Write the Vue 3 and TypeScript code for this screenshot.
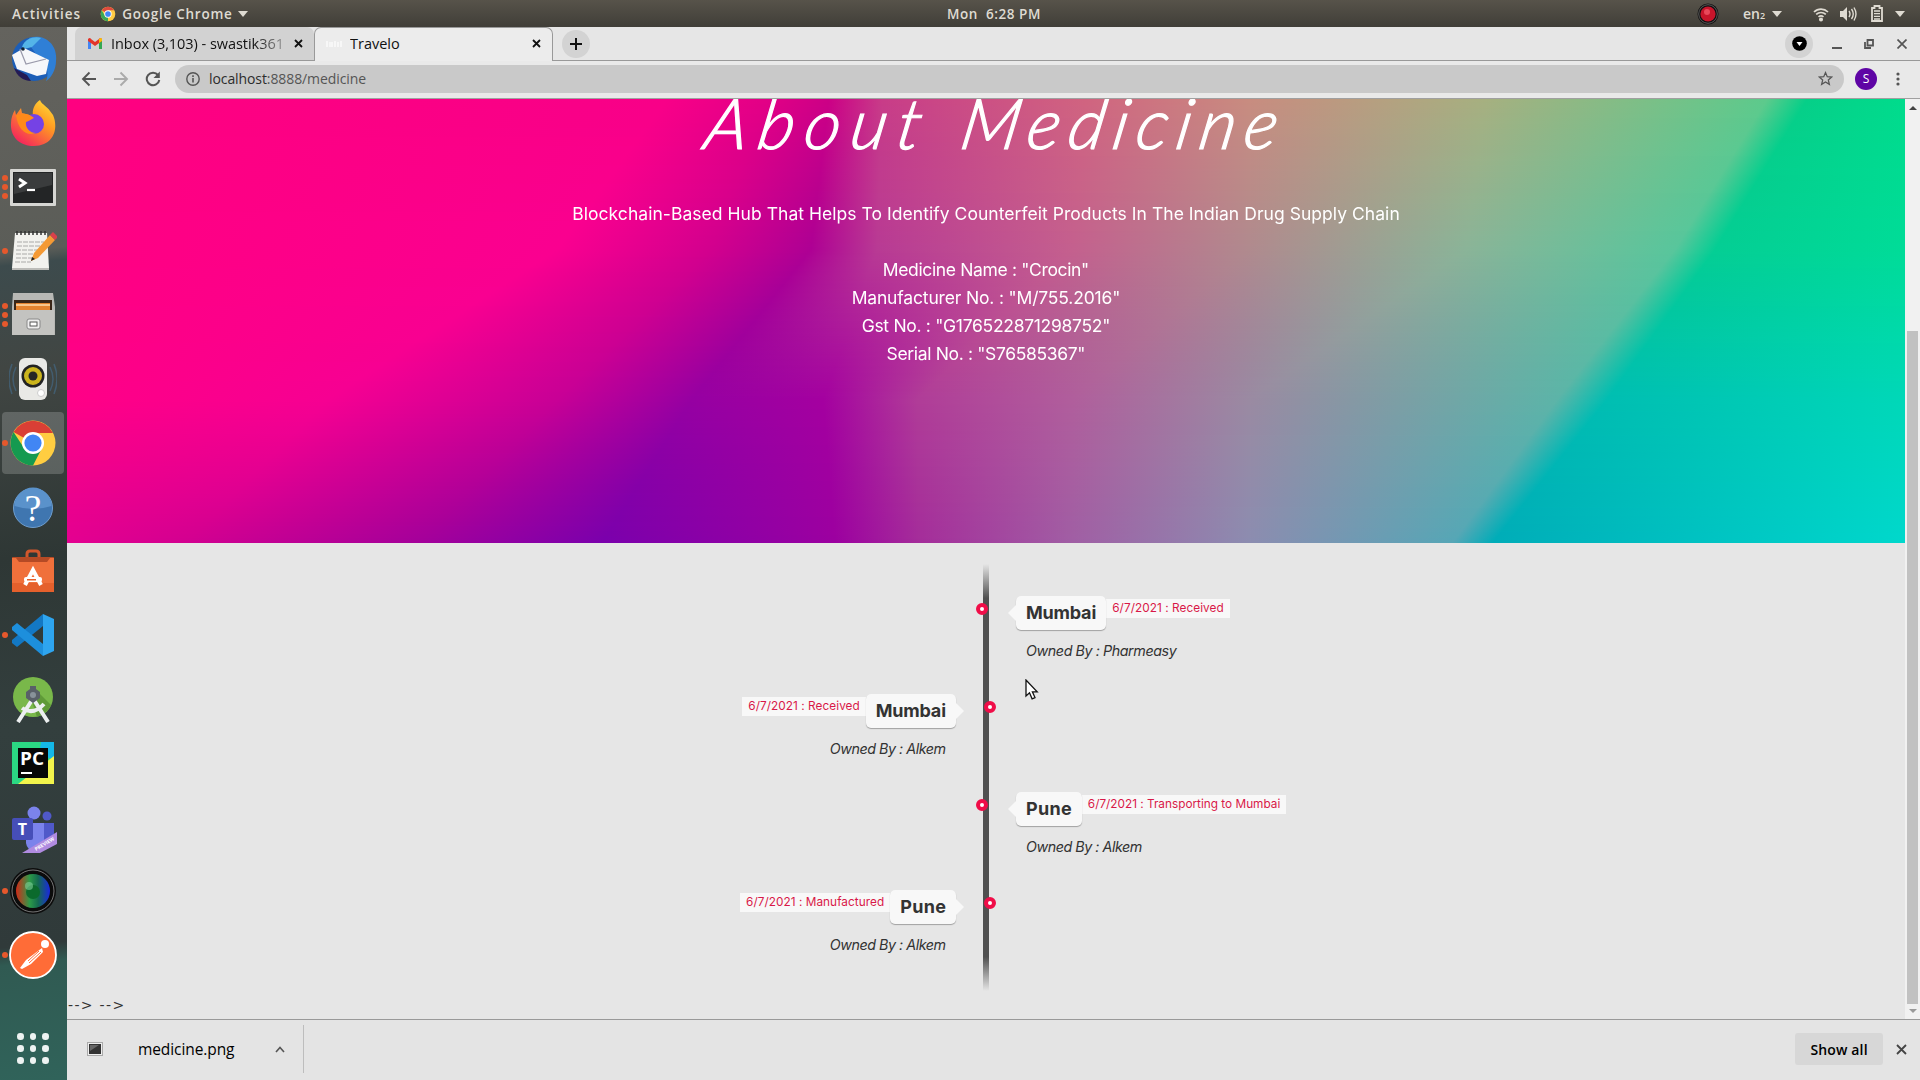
<script setup lang="ts">
import { onMounted, ref } from 'vue'

interface Stop { x: number; c: [number, number, number] }
interface Entry { side: 'left' | 'right'; place: string; placeW: number; status: string; statusW: number; owner: string; ownerW: number }

const entries: Entry[] = [
  { side: 'right', place: 'Mumbai', placeW: 70, status: '6/7/2021 : Received', statusW: 111, owner: 'Owned By : Pharmeasy', ownerW: 151 },
  { side: 'left', place: 'Mumbai', placeW: 70, status: '6/7/2021 : Received', statusW: 111, owner: 'Owned By : Alkem', ownerW: 116 },
  { side: 'right', place: 'Pune', placeW: 46, status: '6/7/2021 : Transporting to Mumbai', statusW: 192, owner: 'Owned By : Alkem', ownerW: 116 },
  { side: 'left', place: 'Pune', placeW: 46, status: '6/7/2021 : Manufactured', statusW: 138, owner: 'Owned By : Alkem', ownerW: 116 },
]

const facts = [
  { text: 'Medicine Name : "Crocin"', w: 207 },
  { text: 'Manufacturer No. : "M/755.2016"', w: 269 },
  { text: 'Gst No. : "G176522871298752"', w: 249 },
  { text: 'Serial No. : "S76585367"', w: 199 },
]

/* Tracks a run of text so that it spans the given width. */
const vFit = {
  mounted(el: HTMLElement, binding: { value: number }) {
    const n = (el.textContent ?? '').trim().length - 1
    if (n < 1) return
    const gap = (binding.value - el.offsetWidth) / n
    el.style.letterSpacing = `${gap}px`
    el.style.marginRight = `${-gap}px`
  },
}

const hex = (s: string): [number, number, number] => [
  parseInt(s.slice(0, 2), 16), parseInt(s.slice(2, 4), 16), parseInt(s.slice(4, 6), 16),
]
const row = (...p: [number, string][]): Stop[] => p.map(([x, c]) => ({ x, c: hex(c) }))

/* Colour rows of the banner, interpolated between one another line by line. */
const rows: { y: number; stops: Stop[] }[] = [
  { y: 0, stops: row([0, 'ff0080'], [600, 'f80088'], [700, 'e20086'], [762, 'cc0086'], [815, 'c83c88'], [1020, 'd06480'], [1182, 'c88c80'], [1418, 'a6b080'], [1700, '5cca8c'], [1740, '06cf88'], [1838, '00dc8c']) },
  { y: 150, stops: row([0, 'ff0082'], [490, 'fa0090'], [645, 'd2008e'], [744, 'ae0094'], [810, 'b83a94'], [1005, 'c4608e'], [1182, 'b08a8e'], [1400, '8ab498'], [1608, '58c69c'], [1648, '04ce94'], [1838, '00dc98']) },
  { y: 300, stops: row([0, 'ff0086'], [260, 'f60092'], [490, 'c80096'], [625, '9600a2'], [756, 'a400a0'], [850, 'b03c98'], [1005, 'b05e9c'], [1182, '9a8aa2'], [1490, '5cb4a8'], [1540, '00beb2'], [1838, '00d8b8']) },
  { y: 444, stops: row([0, 'e40090'], [118, 'd20090'], [350, 'a4009a'], [535, '7a00ac'], [768, '9c00a0'], [851, 'a42c9a'], [1005, 'a05ea4'], [1182, '8c8cb0'], [1385, '56a6b6'], [1425, '00acb8'], [1838, '00d8cc']) },
]

const banner = ref<HTMLCanvasElement | null>(null)

onMounted(() => {
  const ctx = banner.value?.getContext('2d')
  if (!ctx) return
  for (let y = 0; y < 444; y++) {
    let k = 0
    while (k < rows.length - 2 && y >= rows[k + 1].y) k++
    const a = rows[k]
    const b = rows[k + 1]
    const t = (y - a.y) / (b.y - a.y)
    const g = ctx.createLinearGradient(0, 0, 1838, 0)
    a.stops.forEach((s, i) => {
      const e = b.stops[i]
      const mix = (p: number, q: number) => p + (q - p) * t
      const c = s.c.map((v, j) => Math.round(mix(v, e.c[j])))
      g.addColorStop(mix(s.x, e.x) / 1838, `rgb(${c[0]},${c[1]},${c[2]})`)
    })
    ctx.fillStyle = g
    ctx.fillRect(0, y, 1838, 1)
  }
})
</script>

<template>
  <div class="desktop">
    <header class="topbar">
      <div class="tb-left">
        <span v-fit="68" class="t">Activities</span>
        <svg class="tb-chrome" width="16" height="16" viewBox="0 0 48 48"><circle cx="24" cy="24" r="22" fill="#fc4" /><path d="M24 24 5 13A22 22 0 0 1 43 13H24Z" fill="#dd4b3e" /><path d="M24 24 24 46A22 22 0 0 1 5 13L15 29Z" fill="#3aa757" /><circle cx="24" cy="24" r="11" fill="#fff" /><circle cx="24" cy="24" r="8.5" fill="#4286f5" /></svg>
        <span v-fit="110" class="t">Google Chrome</span>
        <i class="caret"></i>
      </div>
      <div class="tb-mid"><span v-fit="93" class="t">Mon&nbsp; 6:28 PM</span></div>
      <div class="tb-right">
        <svg width="22" height="22" viewBox="0 0 22 22"><circle cx="11" cy="11" r="10.5" fill="#111" /><circle cx="11" cy="11" r="9.3" fill="none" stroke="#777" stroke-width=".7" /><circle cx="11" cy="11" r="7.6" fill="#c8152b" /><circle cx="10" cy="9" r="3" fill="#e8485a" /></svg>
        <span class="t lang">en<small>2</small></span><i class="caret"></i>
        <svg class="wifi" width="16" height="16" viewBox="0 0 16 16" fill="none" stroke="#dfdbd2" stroke-width="1.7"><path d="M1 6a10 10 0 0 1 14 0M3.2 8.4a7 7 0 0 1 9.6 0M5.5 10.8a4 4 0 0 1 5 0" /><circle cx="8" cy="13.5" r="1.2" fill="#dfdbd2" /></svg>
        <svg class="vol" width="17" height="16" viewBox="0 0 17 16"><path d="M0 5h3l4-4v14l-4-4H0Z" fill="#dfdbd2" /><path d="M9 5q2 3 0 6M11.500 3q3.500 5 0 10M14 1.500q4 6.500 0 13" fill="none" stroke="#dfdbd2" stroke-width="1.400" /></svg>
        <svg class="bat" width="12" height="17" viewBox="0 0 12 17"><path d="M1 3h2.500V1h5v2H11v13H1Z" fill="none" stroke="#dfdbd2" stroke-width="1.800" /><path d="M3 6h6M3 8.700h6M3 11.300h6M3 14h6" stroke="#dfdbd2" stroke-width="1.300" /></svg>
        <i class="caret"></i>
      </div>
    </header>

    <div class="body">
      <nav class="dock">
        <div class="cell">
          <svg viewBox="0 0 48 48"><circle cx="25" cy="24" r="22" fill="#1c5eb8" /><path d="M20 3C34-2 49 8 47 26c0 9-5 17-10 20 2-5 2-10 0-13L22 12Z" fill="#2f7fd6" /><path d="M13 12C16 3 26 1 32 3l-9 9-8 2Z" fill="#54b4e8" /><path d="M3 20 15 13l25 12-3 14-9 2-20-7Z" fill="#f6f7fa" /><path d="m11 14 6 15 20-5" fill="none" stroke="#99a" stroke-width="1.200" /><path d="M5 33c3 8 9 13 17 13l-4-6Z" fill="#241b55" /><circle cx="14" cy="14" r="1.800" fill="#123" /></svg>
        </div>
        <div class="cell">
          <svg viewBox="0 0 48 48"><defs><linearGradient id="ff" x1="1" y1="0" x2=".3" y2="1"><stop offset="0" stop-color="#ffe83c" /><stop offset=".45" stop-color="#ff9a22" /><stop offset="1" stop-color="#f5265c" /></linearGradient></defs><path d="M31 1c2 5 7 6 10 11l3 4c5 11 3 30-19 31C11 47 1 38 2 24c0-5 2-10 4-13l1 5 5-7 1 5 11 3c-1-6 1-12 7-16Z" fill="url(#ff)" /><circle cx="25" cy="25" r="10" fill="#7542e5" /><path d="M7 16c8-3 15 0 18 3-3 1-4 3-8 4-1 6 4 11 10 11-9 4-18-3-20-18Z" fill="#ff8a1a" /></svg>
        </div>
        <div class="cell"><b class="run three"><i></i><i></i><i></i></b>
          <svg viewBox="0 0 48 48"><rect x="1" y="6" width="46" height="37" rx="1" fill="#d6d6d3" /><rect x="4" y="9" width="40" height="31" fill="#232526" /><path d="M5 10h38v12L5 31Z" fill="#3a3c3d" /><path d="m10 16 6 4-6 4" fill="none" stroke="#fff" stroke-width="3" /><path d="M18 27h8" stroke="#fff" stroke-width="2.200" /></svg>
        </div>
        <div class="cell"><b class="run"><i></i></b>
          <svg viewBox="0 0 48 48"><path d="M6 6h32l2 35H3Z" fill="#f2f2ee" /><path d="M3 41h37v2H3Z" fill="#bcbcb8" /><path d="M8 15h27M8 19h25M7 23h26M7 27h22M7 31h18M6 35h16" stroke="#a9aaa7" stroke-width="1.200" stroke-dasharray="5 1" /><path d="M8 8V4M12 8V4M16 8V4M20 8V4M24 8V4M28 8V4M32 8V4M36 8V4" stroke="#333" stroke-width="1.500" /><path d="m22 34 3-8L41 8l5 5-17 18Z" fill="#f49a35" /><path d="m41 8 3-3 5 5-3 3Z" fill="#d9404a" /><path d="m22 34 1-4 3 2Z" fill="#222" /></svg>
        </div>
        <div class="cell"><b class="run three"><i></i><i></i><i></i></b>
          <svg viewBox="0 0 48 48"><path d="M4 2h40l2 14v28H3V16Z" fill="#b8b8b5" /><path d="M5 9h38v12H5Z" fill="#3a2618" /><path d="M7 12h34v8H7Z" fill="#e5832f" /><path d="M7 14h34" stroke="#ffdcae" stroke-width="1.500" /><path d="M3 19h42v25H3Z" fill="#c3c3c0" /><rect x="18" y="28" width="13" height="10" rx="2" fill="#eee" stroke="#888" /><rect x="21" y="31" width="7" height="4" fill="#fff" stroke="#555" /></svg>
        </div>
        <div class="cell">
          <svg viewBox="0 0 48 48"><path d="M7 12q-6 12 0 24M41 12q6 12 0 24M3 9q-6 15 0 30M45 9q6 15 0 30" fill="none" stroke="#456c8c" stroke-width="1.500" opacity=".6" /><rect x="10" y="3" width="28" height="42" rx="6" fill="#e9e9e6" /><circle cx="24" cy="21" r="11.500" fill="#222" /><circle cx="24" cy="21" r="9" fill="#cbb41c" /><circle cx="24" cy="21" r="4.500" fill="#252525" /><circle cx="32" cy="38" r="3.500" fill="#fff" stroke="#ccc" /></svg>
        </div>
        <div class="cell active"><b class="run"><i></i></b>
          <svg viewBox="0 0 48 48"><circle cx="24" cy="24" r="22.500" fill="#ffcd41" /><path d="M24 24 4.500 13A22.500 22.500 0 0 1 44 14H24Z" fill="#d93f35" /><path d="m33 29-9 17.500A22.500 22.500 0 0 1 4.500 13L15 29Z" fill="#159a50" /><circle cx="24" cy="24" r="11" fill="#fff" /><circle cx="24" cy="24" r="8.600" fill="#4186f4" /></svg>
        </div>
        <div class="cell">
          <svg viewBox="0 0 48 48"><circle cx="24" cy="25" r="19.500" fill="#3f76b0" stroke="#6f9fd0" /><path d="M5.500 23a18.500 18.500 0 0 1 37 0q-18.500 6-37 0Z" fill="#5a92cb" /><text x="24" y="38" text-anchor="middle" font-family="Liberation Serif, serif" font-size="38" fill="#fff">?</text></svg>
        </div>
        <div class="cell">
          <svg viewBox="0 0 48 48"><path d="M18 14V7q0-3 3-3h6q3 0 3 3v7" fill="none" stroke="#d2572c" stroke-width="3" /><path d="M3 10h42l-2 7H5Z" fill="#b54a25" /><path d="M3 11h4l3 4h28l3-4h4v34H3Z" fill="#f0703b" /><path d="M3 36h42v9H3Z" fill="#e5602c" /><path d="m16 38 8-15 8 15" fill="none" stroke="#fff" stroke-width="4" /><rect x="15" y="30" width="18" height="5" rx="2" fill="#fff" /><rect x="18" y="32" width="9" height="1.500" fill="#e5602c" /></svg>
        </div>
        <div class="cell"><b class="run"><i></i></b>
          <svg viewBox="0 0 48 48"><path d="m34 3 11 5v32l-11 5Z" fill="#2ea5ef" /><path d="M34 3v12L8 36l-5-4v-3Z" fill="#1378c4" /><path d="M34 45V33L8 12l-5 4v3Z" fill="#1d8fdc" /></svg>
        </div>
        <div class="cell">
          <svg viewBox="0 0 48 48"><circle cx="24" cy="22" r="20" fill="#79b84a" /><path d="m27 15 15 15q-4 9-14 12l-6-19Z" fill="#5f9a38" /><path d="M23 25 9 47M25 25l14 22M13 33q11 8 22-4" fill="none" stroke="#eceff0" stroke-width="4" /><path d="M21 11h6v3l4 3v6l-7 5-7-5v-6l4-3Z" fill="#596068" /><circle cx="24" cy="20" r="3" fill="#88929a" /></svg>
        </div>
        <div class="cell">
          <svg viewBox="0 0 48 48"><path d="M3 3h42v42H3Z" fill="#2bd883" /><path d="M32 3h13v18L30 15Z" fill="#14b8e8" /><path d="m45 17-36 28h36Z" fill="#f2f44c" /><rect x="9" y="9" width="30" height="30" fill="#070707" /><text x="11" y="26" font-family="Open Sans, sans-serif" font-weight="700" font-size="17" textLength="24" lengthAdjust="spacingAndGlyphs" fill="#fff">PC</text><path d="M12 34h11" stroke="#fff" stroke-width="2" /></svg>
        </div>
        <div class="cell">
          <svg class="low" viewBox="0 0 48 48"><circle cx="25" cy="8" r="6.500" fill="#7b83eb" /><circle cx="38" cy="11" r="4.500" fill="#5059c9" /><path d="M31 18h14v16q-2 7-10 6Z" fill="#5059c9" /><path d="M17 18h18v20q-2 8-10 8-7-1-8-8Z" fill="#7b83eb" /><rect x="3" y="13" width="21" height="22" rx="2" fill="#464eb8" /><text x="13.500" y="30" text-anchor="middle" font-family="Open Sans, sans-serif" font-weight="700" font-size="16" fill="#fff">T</text><path d="m13 48 35-21v12L31 48Z" fill="#b08be0" /><text transform="translate(27 46) rotate(-31)" font-family="Open Sans, sans-serif" font-weight="700" font-size="5" fill="#fff">PREVIEW</text></svg>
        </div>
        <div class="cell"><b class="run"><i></i></b>
          <svg viewBox="0 0 48 48"><defs><linearGradient id="lens"><stop offset="0" stop-color="#d02a18" /><stop offset=".4" stop-color="#2c9a48" /><stop offset=".65" stop-color="#146a50" /><stop offset="1" stop-color="#1a28e0" /></linearGradient></defs><circle cx="24" cy="24" r="23" fill="#0c0c0c" /><circle cx="24" cy="24" r="21" fill="none" stroke="#777" /><circle cx="24" cy="24" r="17" fill="url(#lens)" /><circle cx="24" cy="25" r="7" fill="#0b6a2c" /><circle cx="20" cy="19" r="4" fill="#7fd09a" opacity=".6" /></svg>
        </div>
        <div class="cell"><b class="run"><i></i></b>
          <svg viewBox="0 0 48 48"><circle cx="24" cy="24" r="23" fill="#ff6c37" stroke="#fff" stroke-width="1.800" /><circle cx="36" cy="13" r="4" fill="#fff" /><path d="M33 17 17 29l-6 8 2 1 9-5 12-12Z" fill="#fff" /><path d="m30 20-11 10m13-9L20 32" stroke="#ff6c37" stroke-width="1" /></svg>
        </div>
        <div class="apps"><i v-for="n in 9" :key="n"></i></div>
      </nav>

      <section class="browser">
        <div class="tabs">
          <div class="tab idle">
            <svg width="14" height="11" viewBox="0 0 14 11"><path d="M0 1v10h3V4Z" fill="#4285f4" /><path d="M14 1v10h-3V4Z" fill="#34a853" /><path d="M0 1q2-2 3 0l4 3v4L0 3Z" fill="#e3352b" /><path d="M14 1q-2-2-3 0L7 4v4l7-5Z" fill="#e3352b" /><path d="M11 1q2-2 3 0v2l-3 2Z" fill="#fbbc04" /></svg>
            <span class="name fade"><span v-fit="173" class="t">Inbox (3,103) - swastik361</span></span>
            <svg class="x" width="9" height="9" viewBox="0 0 9 9"><path d="m1 1 7 7m0-7L1 8" stroke="#111" stroke-width="1.800" /></svg>
          </div>
          <div class="tab open">
            <svg width="16" height="12" viewBox="0 0 16 12"><path d="M1 3v6M4 4v5m2-5v5m3-6v6m3-5v5m3-6v6" stroke="#fafafa" stroke-width="1.500" /></svg>
            <span class="name"><span v-fit="50" class="t">Travelo</span></span>
            <svg class="x" width="9" height="9" viewBox="0 0 9 9"><path d="m1 1 7 7m0-7L1 8" stroke="#111" stroke-width="1.800" /></svg>
          </div>
          <div class="round"><svg width="12" height="12" viewBox="0 0 12 12"><path d="M6 0v12M0 6h12" stroke="#111" stroke-width="2" /></svg></div>
          <div class="win">
            <div class="round"><svg width="15" height="15" viewBox="0 0 15 15"><circle cx="7.500" cy="7.500" r="7.300" fill="#000" /><path d="M4.500 6h6l-3 4Z" fill="#fff" /></svg></div>
            <svg width="10" height="12" viewBox="0 0 10 12"><path d="M0 10h10" stroke="#555" stroke-width="2" /></svg>
            <svg width="10" height="10" viewBox="0 0 10 10" fill="none" stroke="#555" stroke-width="1.800"><path d="M3.500 1H9v5.500H3.500ZM1 3v6h6" /></svg>
            <svg width="10" height="10" viewBox="0 0 10 10"><path d="m.5.500 9 9m0-9-9 9" stroke="#555" stroke-width="1.700" /></svg>
          </div>
        </div>

        <div class="toolbar">
          <svg width="16" height="16" viewBox="0 0 16 16" fill="none" stroke="#555" stroke-width="1.900"><path d="M15 8H2m6.500-6.500L2 8l6.500 6.500" /></svg>
          <svg width="16" height="16" viewBox="0 0 16 16" fill="none" stroke="#aaa" stroke-width="1.900"><path d="M1 8h13M7.500 1.500 14 8l-6.500 6.500" /></svg>
          <svg width="16" height="16" viewBox="0 0 16 16" fill="none" stroke="#555" stroke-width="2"><path d="M13 4a6.300 6.300 0 1 0 1.300 5" /><path d="M14.800.500V7H8.500Z" fill="#555" stroke="none" /></svg>
          <div class="omni">
            <svg width="14" height="14" viewBox="0 0 14 14"><circle cx="7" cy="7" r="6.200" fill="none" stroke="#555" stroke-width="1.400" /><path d="M7 6v4.500M7 3.300v1.600" stroke="#555" stroke-width="1.600" /></svg>
            <span v-fit="157" class="t url"><em>localhost</em>:8888/medicine</span>
            <svg class="star" width="15" height="15" viewBox="0 0 24 24"><path d="m12 2.500 2.800 6.600 7.200.6-5.500 4.700 1.700 7-6.200-3.700-6.200 3.700 1.700-7L2 9.700l7.200-.6Z" fill="none" stroke="#555" stroke-width="2" /></svg>
          </div>
          <span class="avatar">S</span>
          <svg class="kebab" width="4" height="14" viewBox="0 0 4 14" fill="#555"><circle cx="2" cy="2" r="1.600" /><circle cx="2" cy="7" r="1.600" /><circle cx="2" cy="12" r="1.600" /></svg>
        </div>

        <div class="view">
          <main class="page">
            <div class="hero">
              <canvas ref="banner" class="banner" width="1838" height="444"></canvas>
              <div class="hero-text">
                <h1><span v-fit="216">About</span><span v-fit="316">Medicine</span></h1>
                <p class="lead"><span v-fit="828" class="t">Blockchain-Based Hub That Helps To Identify Counterfeit Products In The Indian Drug Supply Chain</span></p>
                <p v-for="f in facts" :key="f.text" class="fact"><span v-fit="f.w" class="t">{{ f.text }}</span></p>
              </div>
            </div>
            <ul class="timeline">
              <li v-for="(e, i) in entries" :key="i" :class="e.side">
                <i class="dot"></i>
                <div class="head">
                  <span class="flag"><span v-fit="e.placeW" class="t">{{ e.place }}</span></span>
                  <span class="date"><span v-fit="e.statusW" class="t">{{ e.status }}</span></span>
                </div>
                <div class="desc"><span v-fit="e.ownerW" class="t">{{ e.owner }}</span></div>
              </li>
            </ul>
            <div class="rest"><span v-fit="56" class="t">--&gt; --&gt;</span></div>
            <svg class="cursor" width="14" height="22" viewBox="0 0 14 22"><path d="M1 1v16l3.500-3.200 2.600 6 2.900-1.200-2.600-5.800h4.800Z" fill="#fff" stroke="#111" stroke-width="1.300" /></svg>
          </main>
          <div class="scroll"><i class="up"></i><i class="thumb"></i><i class="down"></i></div>
        </div>

        <footer class="shelf">
          <svg width="16" height="14" viewBox="0 0 16 14"><rect x=".5" y=".5" width="15" height="13" fill="#eee" stroke="#aaa" /><rect x="2" y="2" width="12" height="10" fill="#333" /><path d="M3 3h9L3 9Z" fill="#666" /></svg>
          <span v-fit="96" class="t file">medicine.png</span>
          <svg class="chev" width="10" height="7" viewBox="0 0 10 7"><path d="m1 6 4-4.500L9 6" fill="none" stroke="#555" stroke-width="1.600" /></svg>
          <i class="sep"></i>
          <button class="all"><span v-fit="57" class="t">Show all</span></button>
          <svg class="shut" width="11" height="11" viewBox="0 0 11 11"><path d="m1 1 9 9m0-9-9 9" stroke="#444" stroke-width="1.800" /></svg>
        </footer>
      </section>
    </div>
  </div>
</template>

<style>
body { margin: 0; overflow: hidden; }
</style>

<style scoped>
* { box-sizing: border-box; }
.desktop { width: 1920px; height: 1080px; display: flex; flex-direction: column; font-family: "Open Sans", "Noto Sans", sans-serif; font-size: 14px; color: #111; overflow: hidden; font-variant-ligatures: none; }
.t { display: inline-block; white-space: pre; }
svg { display: block; flex: none; }

.topbar { height: 27px; flex: none; display: flex; align-items: center; background: linear-gradient(#57534a, #403e38); color: #dfdbd2; font-weight: 600; font-size: 13.500px; position: relative; }
.tb-left { display: flex; align-items: center; padding-left: 12px; width: 900px; }
.tb-chrome { margin: 0 6px 0 20px; }
.caret { width: 0; height: 0; border: 5px solid transparent; border-top: 6px solid #dfdbd2; border-bottom: 0; margin-left: 6px; }
.tb-mid { padding-left: 47px; width: 200px; }
.tb-right { margin-left: auto; display: flex; align-items: center; padding-right: 15px; }
.lang { margin-left: 24px; font-size: 14px; width: 23px; }
.lang small { font-size: 9px; }
.wifi { margin-left: 31px; }
.vol { margin-left: 11px; }
.bat { margin: 0 6px 0 14px; }

.body { flex: 1; display: flex; min-height: 0; }
.dock { width: 67px; flex: none; display: flex; flex-direction: column; background: linear-gradient(174deg, #64635e 0, #5b5d58 225px, #3d4b4d 238px, #414643 340px, #2e3735 530px, #333f3e 700px, #303a3a 916px, #305a52 934px, #30635a 1053px); }
.cell { height: 64px; flex: none; display: flex; align-items: center; padding-left: 9px; position: relative; }
.cell > svg { width: 48px; height: 48px; }
.cell > .low { margin-top: 4px; }
.active::before { content: ""; position: absolute; left: 2px; top: 1px; width: 62px; height: 62px; border-radius: 4px; background: #ffffff30; }
.active > svg { position: relative; }
.run { position: absolute; left: 2px; top: 0; height: 64px; display: flex; flex-direction: column; justify-content: center; gap: 3px; }
.run i { width: 6px; height: 6px; border-radius: 50%; background: #e6582c; }
.apps { margin: 46px auto 0 17px; display: grid; grid-template-columns: repeat(3, 7px); gap: 5.500px; }
.apps i { width: 6.500px; height: 6.500px; border-radius: 50%; background: #eef3f2; }

.browser { flex: 1; min-width: 0; display: flex; flex-direction: column; background: #e6e6e6; }
.tabs { height: 34px; flex: none; display: flex; align-items: center; border-bottom: 1px solid #999; background: #e6e6e6; padding-left: 8px; }
.tab { height: 33px; width: 239px; display: flex; align-items: center; border-radius: 7px 7px 0 0; }
.idle { background: #d2d2d2; padding: 0 11px 0 13px; }
.open { height: 34px; background: #ececec; border: 1px solid #999; border-bottom: 0; padding: 0 11px 2px 11px; margin-bottom: -1px; position: relative; }
.name { margin-left: 9px; font-size: 14.500px; overflow: hidden; white-space: nowrap; }
.open .name { margin-left: 8px; }
.fade { width: 174px; -webkit-mask-image: linear-gradient(90deg, #000 82%, #0004); mask-image: linear-gradient(90deg, #000 82%, #0004); }
.x { margin-left: auto; }
.round { width: 28px; height: 28px; border-radius: 50%; background: #d3d3d3; display: flex; align-items: center; justify-content: center; flex: none; }
.tab + .round { margin-left: 9px; }
.win { margin-left: auto; display: flex; align-items: center; padding-right: 13px; }
.win > svg:nth-of-type(1) { margin: 0 22px 0 19px; }
.win > svg:nth-of-type(2) { margin-right: 23px; }

.toolbar { height: 38px; flex: none; display: flex; align-items: center; background: #e9e9e9; border-bottom: 1px solid #a0a0a0; padding: 0 20px 2px 14px; gap: 16px; }
.omni { width: 1669px; height: 28px; border-radius: 14px; background: #c9c9c9; display: flex; align-items: center; padding: 0 11px; margin-left: -2px; }
.url { margin-left: 9px; color: #555; font-size: 14px; }
.url em { font-style: normal; color: #2c2c2c; }
.star { margin-left: auto; }
.avatar { width: 22px; height: 22px; border-radius: 50%; background: #5f05a5; color: #fff; font-size: 12px; line-height: 22px; text-align: center; margin-left: -5px; }
.kebab { margin-left: 3px; }

.view { height: 920px; flex: none; display: flex; }
.page { width: 1838px; position: relative; font-family: Inter, Roboto, sans-serif; overflow: hidden; }
.hero { height: 444px; display: grid; overflow: hidden; }
.banner { grid-area: 1 / 1; display: block; }
.hero-text { grid-area: 1 / 1; color: #fff; text-align: center; position: relative; height: 444px; }
h1 { margin: -19px 0 0; height: 84px; line-height: 84px; font-family: Lato, sans-serif; font-weight: 300; font-style: italic; font-size: 70px; display: flex; justify-content: center; gap: 40px; transform: skewX(-10deg); padding-left: 14px; -webkit-text-stroke: 1.200px #fff; }
.lead { margin: 36px 0 28px; height: 28px; line-height: 28px; font-size: 17.500px; }
.fact { margin: 0; height: 28px; line-height: 28px; font-size: 17.500px; }

.timeline { list-style: none; margin: 21px 0 0; padding: 32px 0 0; height: 427px; position: relative; color: #333; }
.timeline::before { content: ""; position: absolute; left: 916px; top: 0; width: 6px; height: 427px; background: linear-gradient(#50505000 0, #505050 8%, #505050 92%, #50505000 100%); }
li { height: 98px; position: relative; }
li.right { padding-left: 949px; }
li.left { padding-right: 949px; display: flex; flex-direction: column; align-items: flex-end; }
.dot { position: absolute; top: 7px; left: 909px; width: 12px; height: 12px; border-radius: 50%; background: #fff; border: 4px solid #f00d48; }
li.left .dot { left: 917px; }
.head { display: flex; align-items: flex-start; height: 34px; }
li.left .head { flex-direction: row-reverse; }
.flag { height: 34px; line-height: 34px; padding: 0 10px; border-radius: 5px; background: #f8f8f8; box-shadow: 0 1px 1px rgba(0, 0, 0, .3); font-weight: 700; font-size: 18px; position: relative; }
.flag::before { content: ""; position: absolute; top: 9px; left: -8px; border: 8px solid transparent; border-right-color: #f8f8f8; border-left: 0; }
li.left .flag::before { left: auto; right: -8px; border-left: 8px solid #f8f8f8; border-right: 0; }
.date { margin: 3px 0 0; height: 19px; line-height: 19px; padding: 0 6px; background: #f8f8f8; color: #d81848; font-size: 11.800px; }
.desc { margin: 10px 10px 0; height: 22px; line-height: 22px; font-style: italic; font-size: 14.300px; }
.rest { margin-top: 4px; line-height: 20px; padding-left: 1px; font-family: "DejaVu Sans", sans-serif; font-size: 14px; color: #333; }
.cursor { position: absolute; left: 958px; top: 580px; }
.scroll { width: 15px; background: #f1f1f1; display: flex; flex-direction: column; align-items: center; }
.up { border: 4px solid transparent; border-top: 0; border-bottom: 4px solid #444; margin: 7px 0 221px; }
.thumb { width: 11px; height: 673px; background: #c1c1c1; }
.down { border: 4px solid transparent; border-bottom: 0; border-top: 4px solid #999; margin-top: 5px; }

.shelf { flex: 1; border-top: 1px solid #999; background: #e4e4e4; display: flex; align-items: center; padding: 0 13px 2px 20px; }
.file { margin-left: 35px; font-size: 15.500px; color: #000; }
.chev { margin-left: 41px; }
.sep { width: 1px; height: 48px; background: #bdbdbd; margin-left: 18px; }
.all { margin-left: auto; width: 88px; height: 32px; border: 0; border-radius: 3px; background: #d7d7d7; font: 600 14px "Open Sans", sans-serif; color: #000; padding: 0; text-align: center; }
.shut { margin-left: 13px; }
</style>
